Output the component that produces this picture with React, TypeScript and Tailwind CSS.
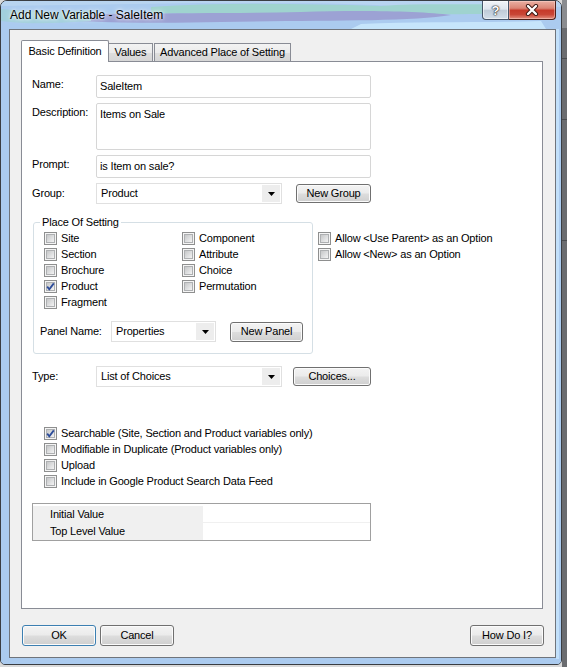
import React from "react";

function Check({ checked = false }: { checked?: boolean }) {
  return (
    <span className="relative flex w-[13px] h-[13px] shrink-0 border border-[#8e8f8f] bg-[#f4f4f4] p-[1px]">
      <span className="flex-1 border border-[#aeb0b2] bg-[linear-gradient(135deg,#c6c7c8,#dedfe0_55%,#f3f3f3)]" />
      {checked && (
        <svg className="absolute left-0 top-0" width="11" height="11" viewBox="0 0 11 11">
          <path d="M2.2 5.6 L4.3 8.2 L8.8 2.4" fill="none" stroke="#2c4c9a" strokeWidth="1.8" />
        </svg>
      )}
    </span>
  );
}

function CheckRow({ label, checked = false }: { label: string; checked?: boolean }) {
  return (
    <div className="flex items-center h-[16px] gap-[4px] whitespace-nowrap">
      <Check checked={checked} />
      <span>{label}</span>
    </div>
  );
}

function Arrow() {
  return (
    <span className="flex w-[18px] m-[1px] bg-[#ededed] items-center justify-center">
      <svg width="7" height="4" viewBox="0 0 7 4">
        <path d="M0 0 H7 L3.5 4 Z" fill="#000" />
      </svg>
    </span>
  );
}

const btn =
  "flex items-center justify-center border rounded-[3px] bg-[linear-gradient(#f3f3f3,#ebebeb_48%,#dddddd_52%,#cfcfcf)] shadow-[inset_0_0_0_1px_#fbfbfb]";

export default function App() {
  return (
    <div className="w-[567px] h-[667px] flex bg-[#d9d9d9] overflow-hidden font-['Liberation_Sans',Arial,sans-serif] text-[11px] leading-[13px] tracking-[-0.17px] text-black">
      <div className="relative w-[562px] h-[665px] shrink-0 flex flex-col border border-[#3a3d42] rounded-t-[7px] rounded-b-[5px] overflow-hidden bg-[#abcbef]">
        <svg className="absolute left-0 top-0" width="562" height="665" viewBox="0 0 562 665">
          <rect width="562" height="665" fill="#abcbef" />
          <path d="M0 0 H562 V6 C480 4 430 3 390 5 C330 1 260 3 200 2 L0 5 Z" fill="#b8d4f0" />
          <path d="M150 6 C220 1 300 3 380 5 C420 2 460 4 500 3 L500 12 C450 15 410 11 370 13 C300 11 230 15 150 12 Z" fill="#9fd3cf" />
          <path d="M20 16 C100 11 200 13 300 11 C360 9 420 10 450 14 C410 21 320 19 220 21 C140 23 70 21 20 16 Z" fill="#9ca2d4" />
          <path d="M360 23 C420 20 480 22 540 20 L545 28 L350 28 Z" fill="#c6e5fb" />
          <path d="M0 8 C30 10 60 12 90 9 L90 20 C60 22 30 24 0 20 Z" fill="#a2d0dd" />
          <rect x="555" y="28" width="3" height="630" fill="#c2e0fa" />
        </svg>

        <div className="relative flex h-[28px] shrink-0 items-center pl-[9px]">
          <span className="text-[12px] tracking-normal [text-shadow:0_0_6px_#ffffff,0_0_3px_#ffffff]">Add New Variable - SaleItem</span>
          <div className="ml-auto mr-[5px] self-start flex h-[19px]">
            <div className="w-[27px] h-[19px] flex items-center justify-center rounded-bl-[4px] border border-t-0 border-[#46556a] bg-[linear-gradient(#f1f4f8,#dfe6ee_45%,#bfcbd8_52%,#d3dee9)] shadow-[inset_0_0_0_1px_rgba(255,255,255,0.55)]">
              <span className="text-[13px] font-bold leading-none text-white [text-shadow:0_0_1px_#222,0_0_1px_#222,0_0_2px_#333]">?</span>
            </div>
            <div className="w-[47px] h-[19px] flex items-center justify-center rounded-br-[4px] border border-t-0 border-l-0 border-[#4e1f18] bg-[linear-gradient(#eab0a3,#db8575_40%,#c63a2a_52%,#c94636_75%,#e39080)] shadow-[inset_0_0_0_1px_rgba(255,220,210,0.45)]">
              <svg width="14" height="12" viewBox="0 0 14 12">
                <path d="M3 2 L11 10 M11 2 L3 10" stroke="#3a1712" strokeWidth="4.2" strokeLinecap="round" />
                <path d="M3 2 L11 10 M11 2 L3 10" stroke="#ffffff" strokeWidth="2.4" strokeLinecap="round" />
              </svg>
            </div>
          </div>
        </div>

        <div className="relative ml-[8px] mr-[5px] mb-[6px] flex-1 flex flex-col border border-[#6f747b] bg-[#f0f0f0]">
          {/* tabs */}
          <div className="relative z-10 mt-[10px] ml-[11px] flex items-end h-[21px]">
            <div className="w-[88px] h-[22px] -mb-px flex items-center justify-center border border-b-0 border-[#898c95] bg-white rounded-t-[2px]">
              Basic Definition
            </div>
            <div className="w-[44px] h-[18px] flex items-center justify-center border border-l-0 border-b-0 border-[#898c95] bg-[linear-gradient(#f3f3f3,#ebebeb_50%,#dedede_50%,#d6d6d6)]">
              Values
            </div>
            <div className="ml-px w-[137px] h-[18px] flex items-center justify-center border border-b-0 border-[#898c95] bg-[linear-gradient(#f3f3f3,#ebebeb_50%,#dedede_50%,#d6d6d6)]">
              Advanced Place of Setting
            </div>
          </div>

          {/* panel */}
          <div className="ml-[11px] w-[522px] h-[548px] border border-[#898c95] bg-white pl-[10px]">
            <div className="flex mt-[13px]">
              <div className="w-[64px] pt-[3px]">Name:</div>
              <div className="w-[275px] h-[23px] flex items-center px-[3px] border border-[#d6d6d6] rounded-[2px] bg-white">SaleItem</div>
            </div>
            <div className="flex mt-[5px]">
              <div className="w-[64px] pt-[3px]">Description:</div>
              <div className="w-[275px] h-[47px] pt-[4px] px-[3px] border border-[#d6d6d6] rounded-[2px] bg-white">Items on Sale</div>
            </div>
            <div className="flex mt-[5px]">
              <div className="w-[64px] pt-[3px]">Prompt:</div>
              <div className="w-[275px] h-[23px] flex items-center px-[3px] border border-[#d6d6d6] rounded-[2px] bg-white">is Item on sale?</div>
            </div>
            <div className="flex items-center mt-[5px]">
              <div className="w-[64px]">Group:</div>
              <div className="w-[186px] h-[21px] flex border border-[#e0e0e0] bg-white">
                <span className="flex-1 flex items-center pl-[4px]">Product</span>
                <Arrow />
              </div>
              <div className={`${btn} ml-[14px] w-[75px] h-[19px] border-[#707070]`}>New Group</div>
            </div>

            <div className="flex items-start mt-[12px]">
              <fieldset className="ml-[1px] w-[280px] border border-[#d5dfe5] rounded-[3px] pb-[11px]">
                <legend className="ml-[6px] px-[2px] leading-[13px]">Place Of Setting</legend>
                <div className="mt-[1px] pl-[10px] grid grid-cols-[138px_1fr]">
                  <CheckRow label="Site" />
                  <CheckRow label="Component" />
                  <CheckRow label="Section" />
                  <CheckRow label="Attribute" />
                  <CheckRow label="Brochure" />
                  <CheckRow label="Choice" />
                  <CheckRow label="Product" checked />
                  <CheckRow label="Permutation" />
                  <CheckRow label="Fragment" />
                </div>
                <div className="flex items-center mt-[11px] pl-[6px]">
                  <div className="w-[71px]">Panel Name:</div>
                  <div className="w-[105px] h-[21px] flex border border-[#e0e0e0] bg-white">
                    <span className="flex-1 flex items-center pl-[4px]">Properties</span>
                    <Arrow />
                  </div>
                  <div className={`${btn} ml-[14px] w-[73px] h-[20px] border-[#707070]`}>New Panel</div>
                </div>
              </fieldset>
              <div className="ml-[5px] mt-[14px]">
                <CheckRow label="Allow <Use Parent> as an Option" />
                <CheckRow label="Allow <New> as an Option" />
              </div>
            </div>

            <div className="flex items-center mt-[12px]">
              <div className="w-[64px]">Type:</div>
              <div className="w-[186px] h-[21px] flex border border-[#e0e0e0] bg-white">
                <span className="flex-1 flex items-center pl-[4px]">List of Choices</span>
                <Arrow />
              </div>
              <div className={`${btn} ml-[11px] w-[78px] h-[19px] border-[#707070]`}>Choices...</div>
            </div>

            <div className="mt-[38px] pl-[12px]">
              <CheckRow label="Searchable (Site, Section and Product variables only)" checked />
              <CheckRow label="Modifiable in Duplicate (Product variables only)" />
              <CheckRow label="Upload" />
              <CheckRow label="Include in Google Product Search Data Feed" />
            </div>

            <div className="mt-[14px] w-[339px] border border-[#a0a0a0] pt-[2px]">
              <div className="flex h-[17px]">
                <div className="w-[170px] bg-[#f0f0f0] pl-[17px] flex items-center">Initial Value</div>
                <div className="flex-1 border-b border-[#f0f0f0]" />
              </div>
              <div className="flex h-[17px]">
                <div className="w-[170px] bg-[#f0f0f0] pl-[17px] flex items-center">Top Level Value</div>
                <div className="flex-1" />
              </div>
            </div>
          </div>

          {/* bottom buttons */}
          <div className="flex mt-[16px]">
            <div className={`${btn} ml-[12px] w-[74px] h-[21px] border-[#3c7fb1] shadow-[inset_0_0_0_1px_#9fdcfb]`}>OK</div>
            <div className={`${btn} ml-[4px] w-[74px] h-[21px] border-[#707070]`}>Cancel</div>
            <div className={`${btn} ml-auto mr-[11px] w-[74px] h-[21px] border-[#707070]`}>How Do I?</div>
          </div>
        </div>
      </div>
      <div className="flex-1 flex flex-col bg-[#6a6c70]">
        <div className="h-[28px] bg-[#8a8c90]" />
        <div className="h-px bg-[#4a4c50] mt-[30px]" />
        <div className="h-px bg-[#4a4c50] mt-[60px]" />
        <div className="h-px bg-[#4a4c50] mt-[120px]" />
      </div>
    </div>
  );
}
